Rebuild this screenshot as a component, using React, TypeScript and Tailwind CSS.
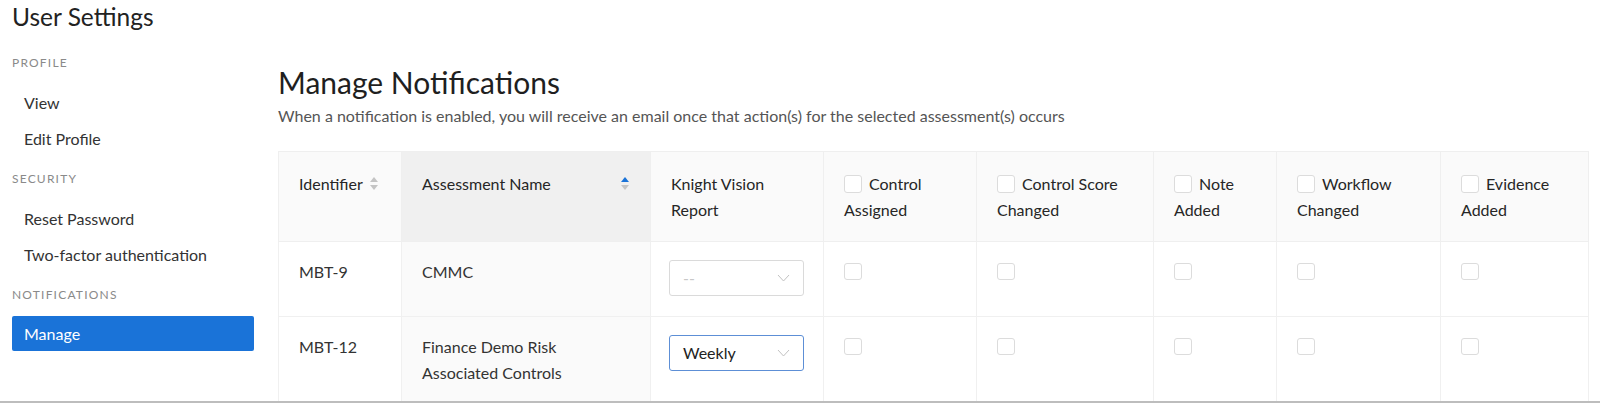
import React from "react";

const font = { fontFamily: "Lato, 'Open Sans', Arial, sans-serif" };

function SortIcon({ active }: { active?: boolean }) {
    return (
        <svg width="10" height="16" viewBox="0 0 10 16" className="inline-block">
            <path d="M5 1 L9 6 L1 6 Z" fill={active ? "#1a73d8" : "#c4c4c4"} />
            <path d="M1 9 L9 9 L5 14 Z" fill="#c4c4c4" />
        </svg>
    );
}

function Box() {
    return <span className="inline-block w-[18px] h-[18px] align-[-3px] mr-[7px] bg-white border border-[#dcdcdc] rounded-[3px]" />;
}

function Chevron() {
    return (
        <svg width="13" height="8" viewBox="0 0 13 8" className="shrink-0">
            <polyline points="1,1 6.5,7 12,1" fill="none" stroke="#c2c2c2" strokeWidth="1" />
        </svg>
    );
}

function Select({ value, focused }: { value?: string; focused?: boolean }) {
    return (
        <div
            className={
                focused
                    ? "flex items-center justify-between w-[135px] h-9 px-[13px] border border-[#5d8fd6] rounded-[3px] bg-white"
                    : "flex items-center justify-between w-[135px] h-9 px-[13px] border border-[#dadada] rounded-[3px] bg-white"
            }
        >
            <span className={value ? "text-[16px] text-[#222]" : "text-[16px] text-[#c8c8c8]"}>{value ?? "--"}</span>
            <Chevron />
        </div>
    );
}

const sections = [
    { label: "PROFILE", items: ["View", "Edit Profile"] },
    { label: "SECURITY", items: ["Reset Password", "Two-factor authentication"] },
];

const checkCols = [
    ["Control", "Assigned"],
    ["Control Score", "Changed"],
    ["Note", "Added"],
    ["Workflow", "Changed"],
    ["Evidence", "Added"],
];

const rows = [
    { id: "MBT-9", name: ["CMMC"], report: undefined as string | undefined, focused: false },
    { id: "MBT-12", name: ["Finance Demo Risk", "Associated Controls"], report: "Weekly", focused: true },
];

export default function App() {
    return (
        <div style={font} className="h-[403px] overflow-hidden bg-white text-[#333] border-b-2 border-[#bdbdbd] flex">
            <aside className="w-[242px] ml-3 shrink-0">
                <h1 className="text-[24.5px] leading-[34px] text-[#222]">User Settings</h1>
                {sections.map((s, i) => (
                    <div key={s.label} className={i === 0 ? "mt-[21px]" : "mt-[14px]"}>
                        <div className="text-[12px] leading-4 tracking-[0.1em] text-[#8a8a8a]">{s.label}</div>
                        <ul className="mt-[14px]">
                            {s.items.map((it) => (
                                <li key={it} className="h-9 leading-9 pl-3 text-[16px] text-[#333]">{it}</li>
                            ))}
                        </ul>
                    </div>
                ))}
                <div className="mt-[14px]">
                    <div className="text-[12px] leading-4 tracking-[0.1em] text-[#8a8a8a]">NOTIFICATIONS</div>
                    <div className="mt-[13px] h-[35px] leading-[35px] pl-3 rounded-[2px] bg-[#1a73d8] text-white text-[16px]">Manage</div>
                </div>
            </aside>

            <main className="ml-6 mr-3 pt-16 flex-1">
                <h2 className="text-[30px] leading-9 text-[#1f1f1f]">Manage Notifications</h2>
                <p className="mt-[5px] text-[16px] leading-[22px] text-[#555]">
                    When a notification is enabled, you will receive an email once that action(s) for the selected assessment(s) occurs
                </p>

                <table className="mt-6 w-[1310px] table-fixed border-collapse text-[16px] leading-[26px]">
                    <colgroup>
                        <col className="w-[123px]" />
                        <col className="w-[249px]" />
                        <col className="w-[173px]" />
                        <col className="w-[153px]" />
                        <col className="w-[177px]" />
                        <col className="w-[123px]" />
                        <col className="w-[164px]" />
                        <col className="w-[148px]" />
                    </colgroup>
                    <thead>
                        <tr className="bg-[#fafafa] text-[#262626] text-left align-top">
                            <th className="font-normal pl-5 pr-3 pt-[19px] pb-[18px] border border-[#efefef]">
                                <span className="inline-flex items-center gap-[6px]">
                                    Identifier <SortIcon />
                                </span>
                            </th>
                            <th className="font-normal pl-5 pr-5 pt-[19px] pb-[18px] border border-[#efefef] bg-[#f0f0f0]">
                                <div className="flex items-center justify-between">
                                    <span>Assessment Name</span>
                                    <SortIcon active />
                                </div>
                            </th>
                            <th className="font-normal px-5 pt-[19px] pb-[18px] border border-[#efefef]">
                                Knight Vision
                                <br />
                                Report
                            </th>
                            {checkCols.map(([a, b]) => (
                                <th key={a + b} className="font-normal px-5 pt-[19px] pb-[18px] border border-[#efefef]">
                                    <Box />
                                    {a}
                                    <br />
                                    {b}
                                </th>
                            ))}
                        </tr>
                    </thead>
                    <tbody>
                        {rows.map((r) => (
                            <tr key={r.id} className="align-top text-[#333]">
                                <td className="px-5 pt-[17px] pb-5 border border-[#f0f0f0]">{r.id}</td>
                                <td className="px-5 pt-[17px] pb-5 border border-[#f0f0f0] bg-[#fafafa]">
                                    {r.name.map((n, i) => (
                                        <div key={i}>{n}</div>
                                    ))}
                                </td>
                                <td className="px-[18px] pt-[18px] pb-5 border border-[#f0f0f0]">
                                    <Select value={r.report} focused={r.focused} />
                                </td>
                                {checkCols.map(([a, b]) => (
                                    <td key={a + b} className="px-5 pt-[21px] pb-5 border border-[#f0f0f0]">
                                        <span className="block w-[18px] h-[17px] border border-[#dcdcdc] rounded-[3px] bg-white" />
                                    </td>
                                ))}
                            </tr>
                        ))}
                    </tbody>
                </table>
            </main>
        </div>
    );
}
